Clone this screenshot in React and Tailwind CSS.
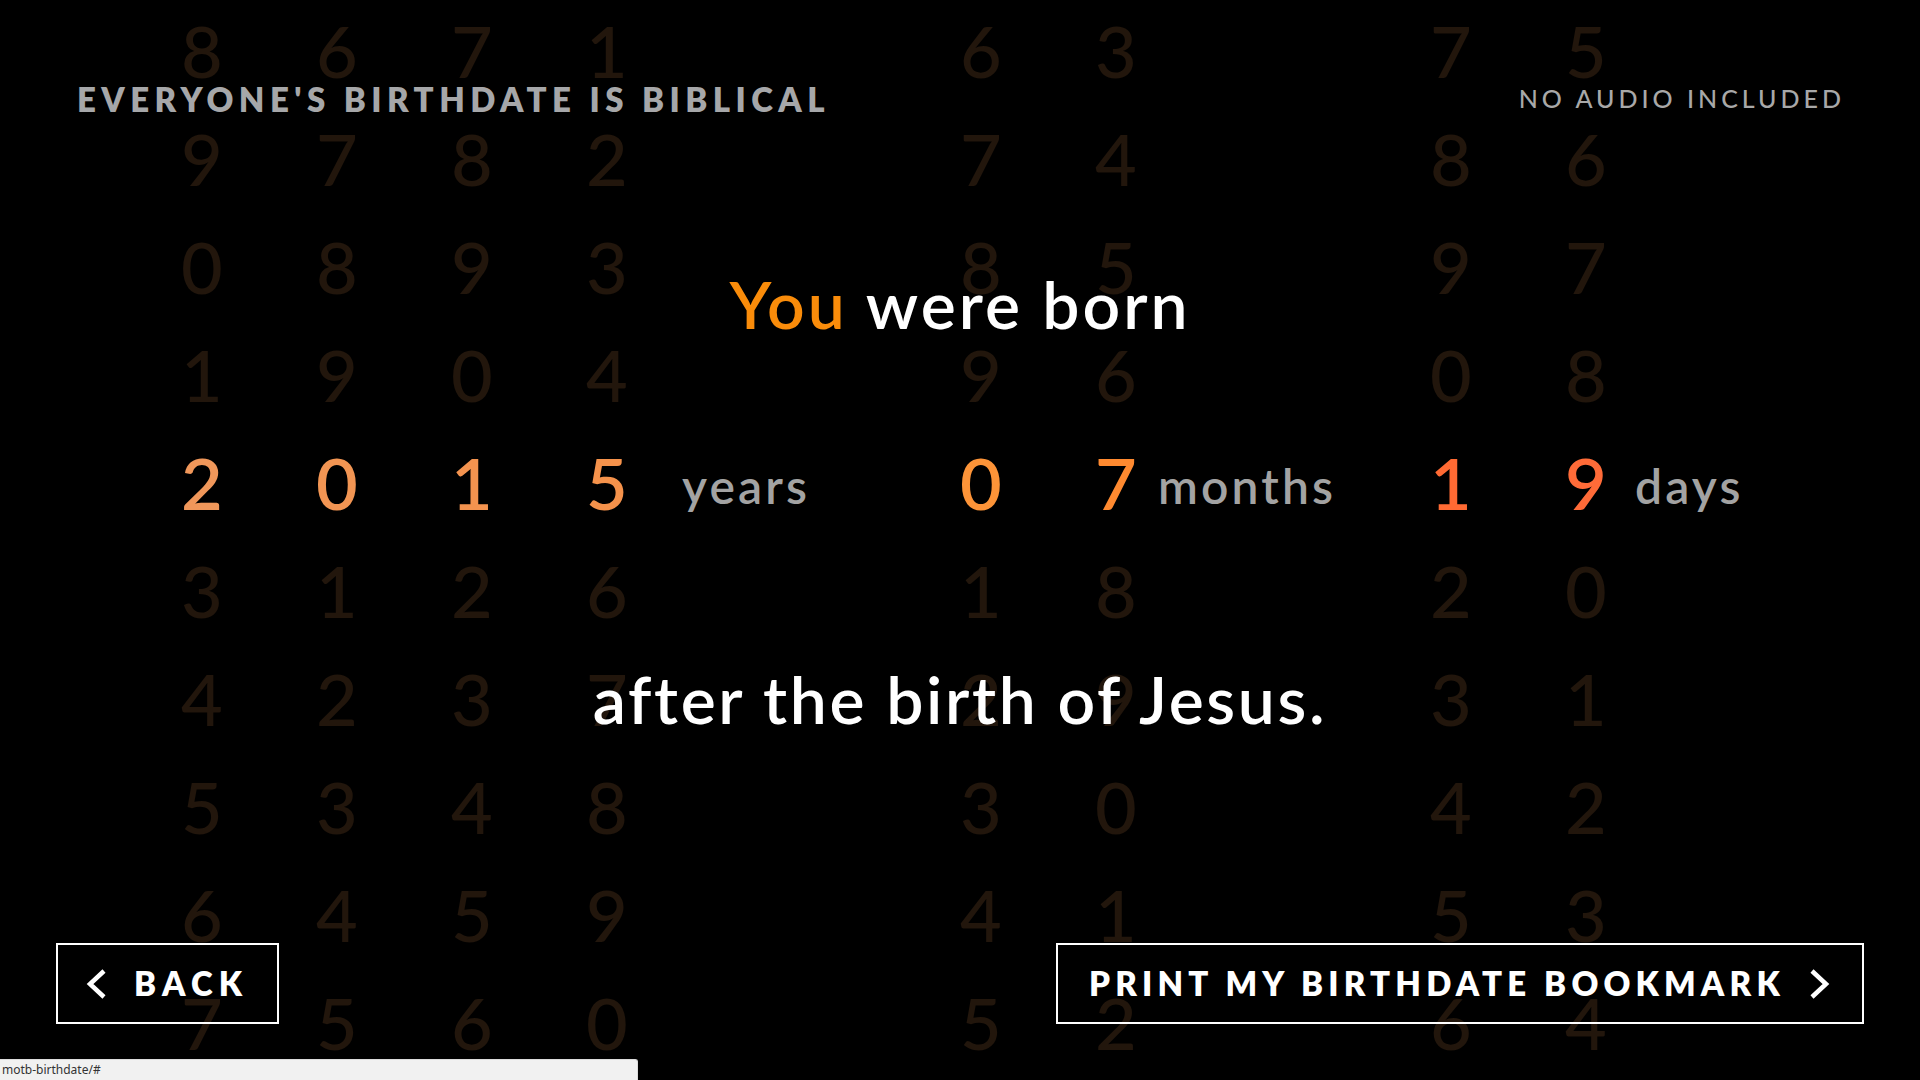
import React from "react";

// first digit shown in each wheel (row 0); row 4 is the selected one
const starts = [8, 6, 7, 1, 6, 3, 7, 5];
const activeColors = [
  "text-[#f0975a]",
  "text-[#f29553]",
  "text-[#f3934f]",
  "text-[#f5924b]",
  "text-[#fd9438]",
  "text-[#ff8a30]",
  "text-[#ff6a33]",
  "text-[#ff6b38]",
];

function Digit({ value, active, color, className }) {
  return (
    <span
      className={`w-[60px] shrink-0 text-center text-[72px] leading-[108px] ${
        active ? `font-semibold ${color}` : "font-medium text-[#22160c]"
      } ${className || ""}`}
    >
      {value}
    </span>
  );
}

function Label({ text, className }) {
  return (
    <span
      className={`shrink-0 self-end text-[48px] leading-[101px] font-semibold tracking-[0.065em] text-[#a3a3a3] ${className}`}
    >
      {text}
    </span>
  );
}

function WheelRow({ row }) {
  const active = row === 4;
  const d = starts.map((s) => (s + row) % 10);
  return (
    <div className="flex h-[108px] pl-[172px]">
      <Digit value={d[0]} active={active} color={activeColors[0]} />
      <Digit value={d[1]} active={active} color={activeColors[1]} className="ml-[75px]" />
      <Digit value={d[2]} active={active} color={activeColors[2]} className="ml-[75px]" />
      <Digit value={d[3]} active={active} color={activeColors[3]} className="ml-[75px]" />
      <Label text={active ? "years" : ""} className="ml-[45px] w-[269px]" />
      <Digit value={d[4]} active={active} color={activeColors[4]} />
      <Digit value={d[5]} active={active} color={activeColors[5]} className="ml-[75px]" />
      <Label text={active ? "months" : ""} className="ml-[12px] w-[263px]" />
      <Digit value={d[6]} active={active} color={activeColors[6]} />
      <Digit value={d[7]} active={active} color={activeColors[7]} className="ml-[75px]" />
      <Label text={active ? "days" : ""} className="ml-[19px] w-[200px]" />
    </div>
  );
}

function Chevron({ flip }) {
  return (
    <svg width="22" height="32" viewBox="0 0 22 32" className="shrink-0">
      <polyline
        points={flip ? "4,3 18,16 4,29" : "18,3 4,16 18,29"}
        fill="none"
        stroke="#ffffff"
        strokeWidth="4.5"
        strokeLinejoin="miter"
      />
    </svg>
  );
}

export default function App() {
  const rows = [0, 1, 2, 3, 4, 5, 6, 7, 8, 9];

  return (
    <div className="relative h-screen w-full overflow-hidden bg-black font-[Lato,sans-serif]">
      <div className="mt-[-4px] flex flex-col">
        {rows.map((r) => (
          <WheelRow key={r} row={r} />
        ))}
      </div>

      <div className="absolute inset-0 flex flex-col">
        <div className="flex items-start justify-between pl-[77px] pr-[75px] pt-[83px]">
          <h1 className="text-[33px] leading-none font-extrabold tracking-[0.165em] text-[#a6a7a9]">
            EVERYONE'S BIRTHDATE IS BIBLICAL
          </h1>
          <p className="mt-[3px] text-[25px] leading-none font-medium tracking-[0.16em] text-[#a8a8a8]">
            NO AUDIO INCLUDED
          </p>
        </div>

        <h2 className="mt-[155px] text-center text-[66px] leading-none font-semibold tracking-[0.045em] text-white">
          <span className="text-[#fa8c0a]">You</span> were born
        </h2>

        <h2 className="mt-[329px] text-center text-[66px] leading-none font-semibold tracking-[0.04em] text-white">
          after the birth of Jesus.
        </h2>

        <div className="mt-auto flex items-center justify-between pb-[56px] pl-[56px] pr-[56px]">
          <button className="flex h-[81px] w-[223px] items-center gap-[26px] border-2 border-white pl-[28px]">
            <Chevron />
            <span className="text-[33px] leading-none font-extrabold tracking-[0.19em] text-white">BACK</span>
          </button>
          <button className="flex h-[81px] w-[808px] items-center justify-between border-2 border-white pl-[31px] pr-[32px]">
            <span className="text-[33px] leading-none font-extrabold tracking-[0.157em] text-white">
              PRINT MY BIRTHDATE BOOKMARK
            </span>
            <Chevron flip />
          </button>
        </div>
      </div>

      <div className="absolute bottom-0 left-0 flex h-[21px] w-[638px] items-center rounded-tr-[3px] border-t border-r border-[#dcdcdc] bg-[#f1f1f1] pl-[2px]">
        <span className="text-[12px] leading-none text-[#333] font-['Noto_Sans',sans-serif]">motb-birthdate/#</span>
      </div>
    </div>
  );
}
